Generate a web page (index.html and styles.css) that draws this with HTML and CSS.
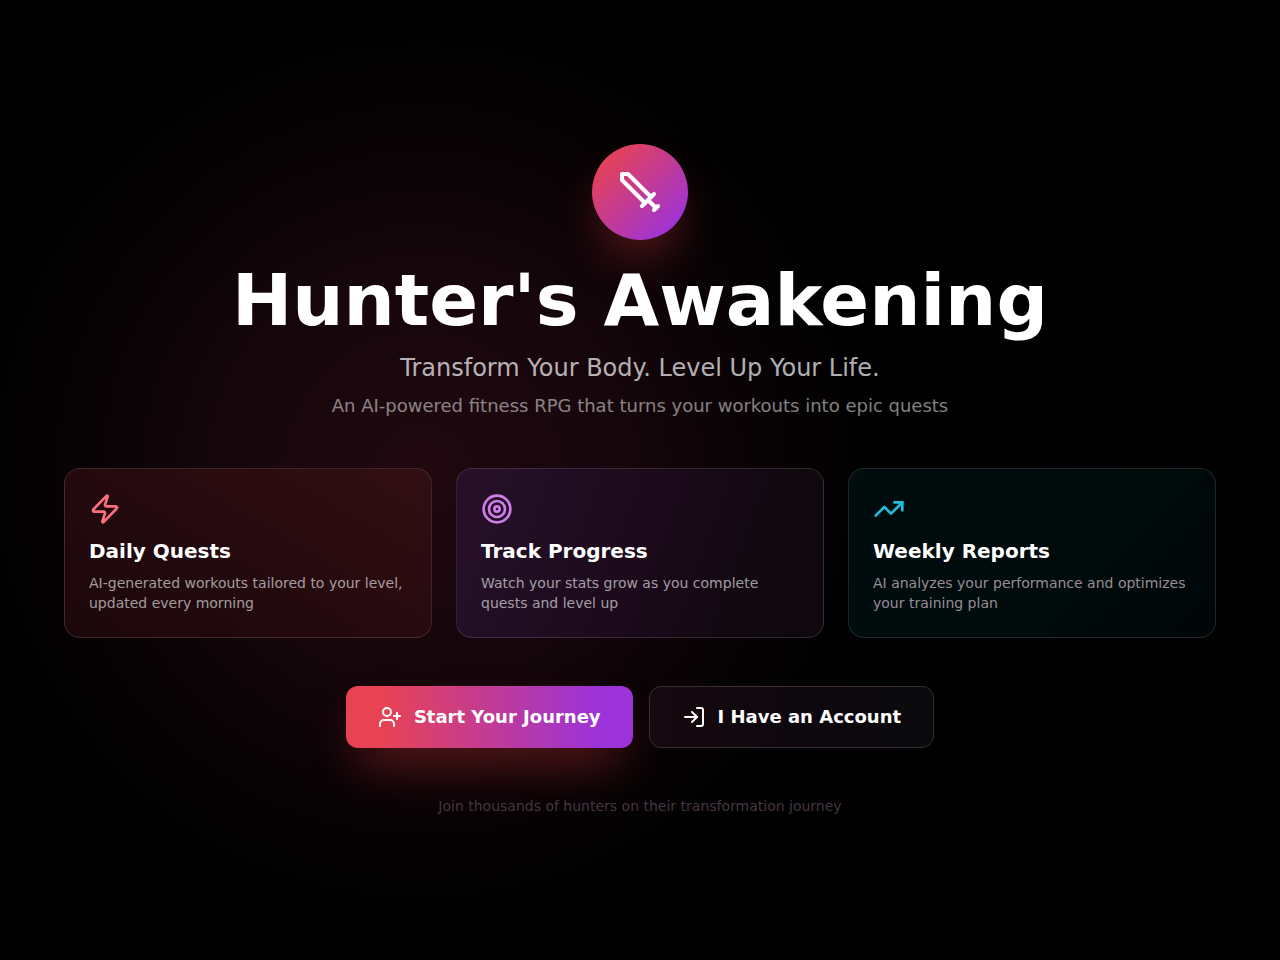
FILE: index.html
```html
<!DOCTYPE html>
<html lang="en">
<head>
    <meta charset="UTF-8">
    <meta name="viewport" content="width=device-width, initial-scale=1.0">
    <title>Hunter's Awakening</title>
    <link rel="stylesheet" href="styles.css">
</head>
<body>
    <main class="landing">
        <header class="hero">
            <div class="logo">
                <svg class="icon" width="48" height="48" viewBox="0 0 24 24" aria-hidden="true">
                    <polyline points="14.5 17.5 3 6 3 3 6 3 17.5 14.5"/>
                    <line x1="13" x2="19" y1="19" y2="13"/>
                    <line x1="16" x2="20" y1="16" y2="20"/>
                    <line x1="19" x2="21" y1="21" y2="19"/>
                </svg>
            </div>
            <h1>Hunter's Awakening</h1>
            <p class="tagline">Transform Your Body. Level Up Your Life.</p>
            <p class="intro">An AI-powered fitness RPG that turns your workouts into epic quests</p>
        </header>

        <section class="features">
            <article class="card card-quests">
                <svg class="icon" width="32" height="32" viewBox="0 0 24 24" aria-hidden="true">
                    <path d="M4 14a1 1 0 0 1-.78-1.63l9.9-10.2a.5.5 0 0 1 .86.46l-1.92 6.02A1 1 0 0 0 13 10h7a1 1 0 0 1 .78 1.63l-9.9 10.2a.5.5 0 0 1-.86-.46l1.92-6.02A1 1 0 0 0 11 14z"/>
                </svg>
                <h2>Daily Quests</h2>
                <p>AI-generated workouts tailored to your level, updated every morning</p>
            </article>
            <article class="card card-progress">
                <svg class="icon" width="32" height="32" viewBox="0 0 24 24" aria-hidden="true">
                    <circle cx="12" cy="12" r="10"/>
                    <circle cx="12" cy="12" r="6"/>
                    <circle cx="12" cy="12" r="2"/>
                </svg>
                <h2>Track Progress</h2>
                <p>Watch your stats grow as you complete quests and level up</p>
            </article>
            <article class="card card-reports">
                <svg class="icon" width="32" height="32" viewBox="0 0 24 24" aria-hidden="true">
                    <polyline points="22 7 13.5 15.5 8.5 10.5 2 17"/>
                    <polyline points="16 7 22 7 22 13"/>
                </svg>
                <h2>Weekly Reports</h2>
                <p>AI analyzes your performance and optimizes your training plan</p>
            </article>
        </section>

        <div class="actions">
            <button type="button" class="btn btn-start">
                <svg class="icon" width="24" height="24" viewBox="0 0 24 24" aria-hidden="true">
                    <path d="M16 21v-2a4 4 0 0 0-4-4H6a4 4 0 0 0-4 4v2"/>
                    <circle cx="9" cy="7" r="4"/>
                    <line x1="19" x2="19" y1="8" y2="14"/>
                    <line x1="22" x2="16" y1="11" y2="11"/>
                </svg>
                Start Your Journey
            </button>
            <button type="button" class="btn btn-login">
                <svg class="icon" width="24" height="24" viewBox="0 0 24 24" aria-hidden="true">
                    <path d="M15 3h4a2 2 0 0 1 2 2v14a2 2 0 0 1-2 2h-4"/>
                    <polyline points="10 17 15 12 10 7"/>
                    <line x1="15" x2="3" y1="12" y2="12"/>
                </svg>
                I Have an Account
            </button>
        </div>

        <p class="footnote">Join thousands of hunters on their transformation journey</p>
    </main>
</body>
</html>
```
FILE: styles.css
```css
* {
    box-sizing: border-box;
}
body {
    margin: 0;
    min-height: 100vh;
    display: flex;
    align-items: center;
    justify-content: center;
    background: radial-gradient(circle at 33% 49%, #20080f 0, #15060b 210px, #0b0306 310px, #050203 380px, #000 470px) #000;
    color: white;
    font-family: "DejaVu Sans", sans-serif;
}
h1, h2, p {
    margin: 0;
}
.icon {
    display: block;
    fill: none;
    stroke: currentColor;
    stroke-width: 2;
    stroke-linecap: round;
    stroke-linejoin: round;
}
.landing {
    width: 90%;
    max-width: 1280px;
    display: flex;
    flex-direction: column;
    gap: 48px;
    padding: 48px 0;
    text-align: center;
}

/* hero */
.hero {
    display: flex;
    flex-direction: column;
    align-items: center;
}
.logo {
    width: 96px;
    height: 96px;
    display: flex;
    align-items: center;
    justify-content: center;
    margin-bottom: 24px;
    border-radius: 50%;
    background: linear-gradient(135deg, #e8434f 10%, #9b32db 90%);
    box-shadow: 0 25px 50px -12px rgba(220, 60, 60, 0.45);
}
h1 {
    font-size: 72px;
    line-height: 72px;
    margin-bottom: 16px;
}
.tagline {
    font-size: 24px;
    line-height: 32px;
    margin-bottom: 8px;
    color: rgba(255, 255, 255, 0.7);
}
.intro {
    font-size: 18px;
    line-height: 28px;
    color: rgba(255, 255, 255, 0.5);
}

/* feature cards */
.features {
    display: grid;
    grid-template-columns: repeat(3, 1fr);
    gap: 24px;
    text-align: left;
}
.card {
    padding: 24px;
    border: 1px solid rgba(255, 255, 255, 0.12);
    border-radius: 16px;
}
.card h2 {
    margin: 12px 0 8px;
    font-size: 20px;
    line-height: 28px;
}
.card p {
    font-size: 14px;
    line-height: 20px;
    color: rgba(255, 255, 255, 0.6);
}
.card-quests {
    background: linear-gradient(30deg, #1c070b, #22090d 40%, #2d0c11 75%, #310e12);
}
.card-quests .icon {
    color: #fb6f80;
}
.card-progress {
    background: linear-gradient(110deg, #27112a, #1c0a1b 50%, #0f080e 85%);
}
.card-progress .icon {
    color: #cf7eea;
}
.card-reports {
    background: linear-gradient(135deg, #010c0e, #000b0c 60%, #000607);
}
.card-reports .icon {
    color: #1fbedb;
}
.card-reports p {
    color: #978e95;
}

/* buttons */
.actions {
    display: flex;
    flex-wrap: wrap;
    justify-content: center;
    gap: 16px;
}
.btn {
    display: flex;
    align-items: center;
    gap: 12px;
    padding: 16px 32px;
    border: 0;
    border-radius: 12px;
    color: white;
    font-family: inherit;
    font-size: 18px;
    font-weight: bold;
    line-height: 28px;
    cursor: pointer;
}
.btn-start {
    background: linear-gradient(90deg, #e84352 12%, #9b33d8 88%);
    box-shadow: 0 25px 50px -12px rgba(220, 60, 60, 0.45);
}
.btn-login {
    background: linear-gradient(90deg, #16080e, #0e080e 50%, #0a0a0d);
    border: 1px solid #3a2c38;
}
.footnote {
    font-size: 14px;
    line-height: 20px;
    color: #463642;
}
```
